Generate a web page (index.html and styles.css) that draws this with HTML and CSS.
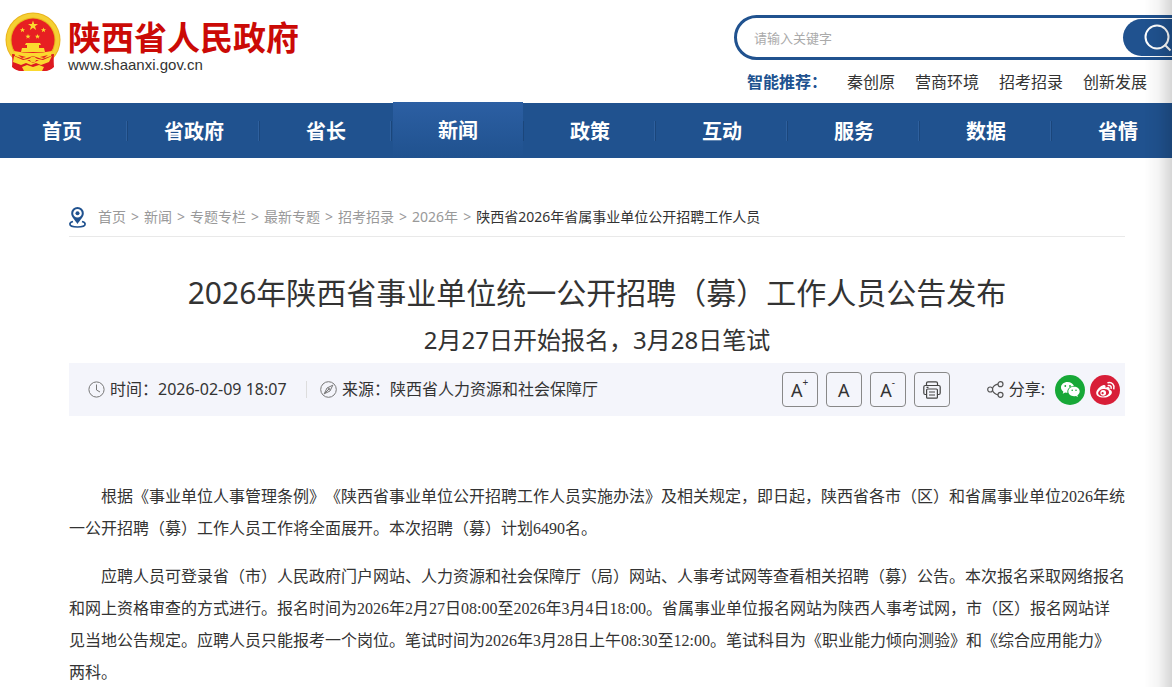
FILE: index.html
```html
<!DOCTYPE html>
<html lang="zh-CN">
<head>
    <meta charset="UTF-8">
    <meta name="viewport" content="width=device-width, initial-scale=1.0">
    <title>2026年陕西省事业单位统一公开招聘&#65288;募&#65289;工作人员公告发布</title>
    <link rel="stylesheet" href="styles.css">
</head>
<body>
<header class="site-header">
    <a class="logo" href="#">
        <svg class="emblem" viewBox="0 0 56 60" aria-hidden="true">
            <path d="M8 43 L7 55 Q11 59 17 59 L39 59 Q45 59 49 55 L48 43Z" fill="#dd1a20"/>
            <circle cx="28" cy="28" r="27.500" fill="#e9b31c"/>
            <circle cx="28" cy="28" r="24.500" fill="none" stroke="#f5d033" stroke-width="4"/>
            <circle cx="28" cy="28" r="21.500" fill="#e71f22"/>
            <path d="M28 8.500l1.200 3.500h3.800l-3 2.300 1.100 3.700-3.100-2.200-3.100 2.200 1.100-3.700-3-2.300h3.800z" fill="#fbd92f"/>
            <g fill="#fbd92f">
                <path id="star" d="M17.500 15.500l.7 1.700h1.800l-1.400 1.200.5 1.800-1.600-1.100-1.600 1.100.5-1.800-1.400-1.200h1.800z"/>
                <use href="#star" x="21"/>
                <use href="#star" x="5.500" y="6.500"/>
                <use href="#star" x="15" y="6.500"/>
                <path d="M21 31h14l1 2h-2v3h5l1 4H16l1-4h5v-3h-2z"/>
            </g>
            <path d="M7 42q10 1 21 1t21-1l-1 13q-4 4-9 4H17q-5 0-9-4z" fill="#dd1a20"/>
            <g fill="#fbd92f">
                <path d="M9 39q9 2 19 2t19-2l-1 5-9 3-9-3-9 3-9-3z"/>
                <path d="M9 44l9 4 5-1q5-3 10 0l5 1 9-4-3 6-8 3-5-2-5 2-5-2-5 2-8-3z"/>
                <path d="M17 55l5-2 6 2 6-2 5 2-2 4H19z"/>
            </g>
            <path d="M13 43l8 2-4 1zM43 43l-8 2 4 1zM22 48h12l-6 3z" fill="#e71f22"/>
            <circle cx="28" cy="47.500" r="3" fill="#f8cf2a"/>
        </svg>
        <span class="logo-text">
            <strong>陕西省人民政府</strong>
            <small>www.shaanxi.gov.cn</small>
        </span>
    </a>
    <div class="search-area">
        <form class="search">
            <input type="text" placeholder="请输入关键字" aria-label="请输入关键字">
            <button type="button" aria-label="搜索">
                <svg width="28" height="28" viewBox="0 0 28 28" fill="none" stroke="#fff" stroke-width="2" aria-hidden="true">
                    <circle cx="13" cy="13" r="11.500"/>
                    <path d="M20.500 20.500l6 6"/>
                </svg>
            </button>
        </form>
        <div class="recommend">
            <b>智能推荐&#65306;</b>
            <a href="#">秦创原</a>
            <a href="#">营商环境</a>
            <a href="#">招考招录</a>
            <a href="#">创新发展</a>
        </div>
    </div>
</header>

<nav class="main-nav">
    <ul>
        <li><a href="#">首页</a></li>
        <li><a href="#">省政府</a></li>
        <li><a href="#">省长</a></li>
        <li class="active"><a href="#">新闻</a></li>
        <li><a href="#">政策</a></li>
        <li><a href="#">互动</a></li>
        <li><a href="#">服务</a></li>
        <li><a href="#">数据</a></li>
        <li><a href="#">省情</a></li>
    </ul>
</nav>

<main>
    <div class="breadcrumb">
        <svg width="17" height="21" viewBox="0 0 17 21" aria-hidden="true">
            <path d="M4 14.500C1.500 15.200.9 16.200.9 17c0 1.800 3.400 3 7.600 3s7.600-1.200 7.600-3c0-.8-.6-1.800-3.100-2.500" fill="none" stroke="#20528f" stroke-width="1.700"/>
            <path fill="#20528f" fill-rule="evenodd" d="M8.500 0a6.300 6.300 0 0 0-6.300 6.300c0 4 3.800 6.700 6.300 10.700 2.500-4 6.300-6.700 6.300-10.700A6.300 6.300 0 0 0 8.500 0zm0 2a4.300 4.300 0 1 1 0 8.600 4.300 4.300 0 0 1 0-8.600z"/>
            <circle cx="8.500" cy="6.300" r="2" fill="#20528f"/>
        </svg>
        <a href="#">首页</a><span>&gt;</span>
        <a href="#">新闻</a><span>&gt;</span>
        <a href="#">专题专栏</a><span>&gt;</span>
        <a href="#">最新专题</a><span>&gt;</span>
        <a href="#">招考招录</a><span>&gt;</span>
        <a href="#">2026年</a><span>&gt;</span>
        <a class="current" href="#">陕西省2026年省属事业单位公开招聘工作人员</a>
    </div>

    <h1>2026年陕西省事业单位统一公开招聘&#65288;募&#65289;工作人员公告发布</h1>
    <h2>2月27日开始报名&#65292;3月28日笔试</h2>

    <div class="meta">
        <div class="meta-item time">
            <svg width="17" height="17" viewBox="0 0 17 17" fill="none" stroke="#777" aria-hidden="true">
                <circle cx="8.500" cy="8.500" r="7.600"/>
                <path d="M8.500 3.500v5.500l3.500 2"/>
            </svg>
            <span>时间&#65306;2026-02-09 18:07</span>
        </div>
        <div class="meta-item source">
            <svg width="17" height="17" viewBox="0 0 17 17" fill="none" stroke="#777" aria-hidden="true">
                <circle cx="8.500" cy="8.500" r="7.800"/>
                <path d="M12.800 4.200L10 10l-5.800 2.800L7 7z M4.200 12.800L9 8"/>
                <circle cx="9" cy="8" r=".8"/>
            </svg>
            <span>来源&#65306;陕西省人力资源和社会保障厅</span>
        </div>
        <div class="tools">
            <button type="button" aria-label="放大字体">A<sup>+</sup></button>
            <button type="button" aria-label="默认字体">A</button>
            <button type="button" aria-label="缩小字体">A<sup>-</sup></button>
            <button type="button" aria-label="打印">
                <svg width="18" height="18" viewBox="0 0 18 18" fill="none" stroke="#444" stroke-width="1.200" aria-hidden="true">
                    <path d="M3.500 4.500V2.200Q3.500.8 5 .8h8q1.500 0 1.500 1.400v2.300M3.500 13.500H2.200Q.8 13.500.8 12V6q0-1.500 1.500-1.500h13.400q1.500 0 1.500 1.500v6q0 1.500-1.400 1.500h-1.300"/>
                    <rect x="3.600" y="8" width="10.800" height="9.200" rx="1"/>
                    <path d="M6 11h6M6 14h6M3.500 6.300h2"/>
                </svg>
            </button>
        </div>
        <div class="share">
            <svg width="17" height="17" viewBox="0 0 17 17" fill="none" stroke="#555" stroke-width="1.200" aria-hidden="true">
                <circle cx="3.200" cy="8.500" r="2.500"/>
                <circle cx="13.500" cy="3.200" r="2.500"/>
                <circle cx="13.500" cy="13.800" r="2.500"/>
                <path d="M5.500 7.400Q7 3.800 11 3.200M5.500 9.600Q7 13.200 11 13.800"/>
            </svg>
            <span>分享:</span>
            <a href="#" aria-label="微信">
                <svg width="30" height="30" viewBox="0 0 30 30" aria-hidden="true">
                    <circle cx="15" cy="15" r="15" fill="#17a837"/>
                    <path d="M12.500 7C8.900 7 6 9.400 6 12.500c0 1.700.9 3.200 2.400 4.200l-.7 2 2.500-1.200c.7.200 1.500.3 2.300.3-.7-4 2.500-6.800 6.400-6.800C18.300 8.700 15.700 7 12.500 7z" fill="#fff"/>
                    <path d="M19 11.800c-3.200 0-5.700 2-5.700 4.700s2.500 4.700 5.700 4.700c.7 0 1.300-.1 1.900-.3l2 1-.5-1.700c1.400-.9 2.300-2.200 2.300-3.700 0-2.700-2.500-4.700-5.700-4.700z" fill="#fff"/>
                    <g fill="#17a837"><circle cx="10.300" cy="11" r=".9"/><circle cx="15" cy="11" r=".9"/><circle cx="17.200" cy="15.200" r=".8"/><circle cx="21" cy="15.200" r=".8"/></g>
                </svg>
            </a>
            <a href="#" aria-label="微博">
                <svg width="30" height="30" viewBox="0 0 30 30" aria-hidden="true">
                    <circle cx="15" cy="15" r="15" fill="#d81e38"/>
                    <path d="M13.500 10c-2.800.6-7.300 4.800-7.300 8 0 2.800 3.300 4.600 7.300 4.600 5 0 8.400-2.900 8.400-5.400 0-1.500-1.200-2.300-2.400-2.700.8-2.100-1-3.100-4.100-1.800.6-1.900 0-3-1.900-2.700z" fill="#fff"/>
                    <ellipse cx="13.600" cy="17.700" rx="5.500" ry="3.700" transform="rotate(-8 13.600 17.700)" fill="#d81e38"/>
                    <circle cx="13.200" cy="17.800" r="2.900" fill="#fff"/>
                    <circle cx="12.600" cy="18.200" r="1.100" fill="#d81e38"/>
                    <path d="M18 7.700c4-.8 6.800 2 5.800 6M18.300 10.500c2-.4 3.300.8 2.800 2.800" fill="none" stroke="#fff" stroke-width="1.500" stroke-linecap="round"/>
                </svg>
            </a>
        </div>
    </div>

    <article>
        <p>根据《事业单位人事管理条例》《陕西省事业单位公开招聘工作人员实施办法》及相关规定&#65292;即日起&#65292;陕西省各市&#65288;区&#65289;和省属事业单位2026年统一公开招聘&#65288;募&#65289;工作人员工作将全面展开。本次招聘&#65288;募&#65289;计划6490名。</p>
        <p>应聘人员可登录省&#65288;市&#65289;人民政府门户网站、人力资源和社会保障厅&#65288;局&#65289;网站、人事考试网等查看相关招聘&#65288;募&#65289;公告。本次报名采取网络报名和网上资格审查的方式进行。报名时间为2026年2月27日08:00至2026年3月4日18:00。省属事业单位报名网站为陕西人事考试网&#65292;市&#65288;区&#65289;报名网站详见当地公告规定。应聘人员只能报考一个岗位。笔试时间为2026年3月28日上午08:30至12:00。笔试科目为《职业能力倾向测验》和《综合应用能力》两科。</p>
    </article>
</main>
<div class="edge-shadow"></div>
</body>
</html>
```
FILE: styles.css
```css
* {
    box-sizing: border-box;
}

body {
    margin: 0;
    overflow-x: hidden;
    background: #fff;
    color: #333;
    font-family: "Noto Sans", "Noto Sans CJK SC", sans-serif;
    font-size: 16px;
    text-spacing-trim: space-all;
}

a {
    color: inherit;
    text-decoration: none;
}

svg {
    display: block;
    flex: none;
}

.site-header {
    display: flex;
    justify-content: space-between;
    height: 103px;
    padding-left: 5px;
}

.logo {
    display: flex;
    gap: 7px;
    padding-top: 12px;
}

.emblem {
    width: 56px;
    height: 60px;
}

.logo-text {
    display: flex;
    flex-direction: column;
    padding-top: 5px;
    white-space: nowrap;
}

.logo-text strong {
    color: #cb0a06;
    font-family: "Noto Sans CJK SC", sans-serif;
    font-size: 33px;
    font-weight: 700;
    line-height: 38px;
}

.logo-text small {
    font-family: "Liberation Sans", Arial, sans-serif;
    font-size: 15px;
    line-height: 20px;
}

.search-area {
    flex: 0 0 438px;
    padding-top: 15px;
}

.search {
    display: flex;
    height: 45px;
    margin-right: -24px;
    padding: 1px;
    border: 3px solid #20528f;
    border-radius: 23px;
}

.search input {
    flex: 1;
    min-width: 0;
    padding: 0 16px;
    border: 0;
    outline: 0;
    background: none;
    font-family: inherit;
    font-size: 13px;
}

.search input::placeholder {
    color: #aaa;
}

.search button {
    flex: 0 0 69px;
    padding: 0 0 0 21px;
    border: 0;
    border-radius: 19px;
    background: #20528f;
}

.recommend {
    display: flex;
    gap: 20px;
    padding: 10px 0 0 13px;
    line-height: 24px;
    white-space: nowrap;
}

.recommend b {
    color: #20528f;
}

.main-nav {
    height: 55px;
    background: #20528f;
}

.main-nav ul {
    display: flex;
    margin: 0 0 0 -4px;
    padding: 0;
    list-style: none;
}

.main-nav li {
    flex: 0 0 132px;
    height: 55px;
    color: #fff;
    font-size: 20px;
    font-weight: bold;
    line-height: 57px;
    text-align: center;
    background: linear-gradient(#1b467b, #1b467b) right 0 center / 1px 20px no-repeat,
        linear-gradient(#2e609e, #2e609e) right 1px center / 1px 20px no-repeat;
}

.main-nav a {
    display: block;
    height: 55px;
}

.main-nav .active a {
    margin: -1px 1px 0;
    background: linear-gradient(#2c5fa3, #20528f);
}

main {
    margin: 0 47px 0 69px;
    padding-top: 40px;
}

.breadcrumb {
    display: flex;
    align-items: center;
    gap: 5px;
    height: 39px;
    border-bottom: 1px solid #e9e9e9;
    color: #999;
    font-size: 14px;
    line-height: 18px;
    white-space: nowrap;
}

.breadcrumb svg {
    margin-right: 7px;
}

.breadcrumb .current {
    color: #333;
}

h1,
h2 {
    margin: 0;
    font-weight: normal;
    text-align: center;
}

h1 {
    margin-top: 32px;
    font-size: 30px;
    line-height: 48px;
}

h2 {
    font-size: 24px;
    line-height: 46px;
}

.meta {
    display: flex;
    align-items: center;
    height: 53px;
    padding: 0 5px 0 19px;
    background: #f4f5fb;
    line-height: 17px;
    white-space: nowrap;
}

.meta-item {
    display: flex;
    align-items: center;
    gap: 5px;
}

.time {
    width: 218px;
}

.source {
    padding-left: 13px;
    border-left: 1px solid #ddd;
}

.tools {
    display: flex;
    gap: 8px;
    margin-left: auto;
}

.tools button {
    display: flex;
    align-items: center;
    justify-content: center;
    width: 36px;
    height: 35px;
    padding: 0;
    border: 1px solid #888;
    border-radius: 4px;
    background: none;
    color: #333;
    font-family: inherit;
    font-size: 18px;
}

.tools sup {
    align-self: flex-start;
    font-size: 10px;
    line-height: 18px;
}

.share {
    display: flex;
    align-items: center;
    gap: 5px;
    margin-left: 37px;
}

.share span {
    margin-right: 5px;
}

article {
    padding-top: 65px;
    font-family: "Liberation Serif", "Noto Sans CJK SC", serif;
    line-height: 32px;
}

article p {
    margin: 0 0 16px;
    text-indent: 2em;
}

/* soft shade along the window's right side */
.edge-shadow {
    position: fixed;
    top: 0;
    right: 0;
    bottom: 0;
    width: 28px;
    background: linear-gradient(to right, transparent, rgba(0, 0, 0, .04) 50%, rgba(0, 0, 0, .16));
    pointer-events: none;
}
```
